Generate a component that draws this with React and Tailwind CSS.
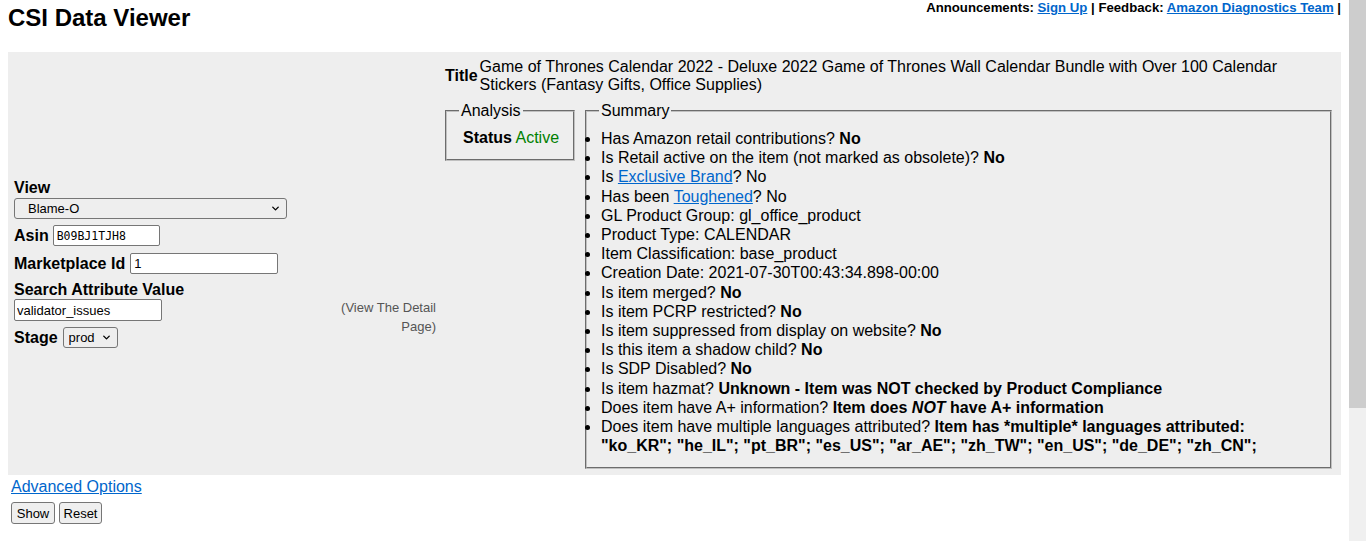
import { FiChevronDown } from 'react-icons/fi';

const SUMMARY = [
  { q: 'Has Amazon retail contributions?', a: 'No' },
  { q: 'Is Retail active on the item (not marked as obsolete)?', a: 'No' },
  { q: 'Is', link: 'Exclusive Brand', tail: '? No' },
  { q: 'Has been', link: 'Toughened', tail: '? No' },
  { q: 'GL Product Group: gl_office_product' },
  { q: 'Product Type: CALENDAR' },
  { q: 'Item Classification: base_product' },
  { q: 'Creation Date: 2021-07-30T00:43:34.898-00:00' },
  { q: 'Is item merged?', a: 'No' },
  { q: 'Is item PCRP restricted?', a: 'No' },
  { q: 'Is item suppressed from display on website?', a: 'No' },
  { q: 'Is this item a shadow child?', a: 'No' },
  { q: 'Is SDP Disabled?', a: 'No' },
  { q: 'Is item hazmat?', a: 'Unknown - Item was NOT checked by Product Compliance' },
];

const LINK = 'text-[#0066cc] underline';

const Select = ({ value, width, textPad }) => (
  <div className={`relative h-[21px] ${width}`}>
    <select
      defaultValue={value}
      className={`block appearance-none w-full h-full border border-[#767676] rounded-[3px] bg-transparent text-[13px] ${textPad} pr-[20px] text-black`}
    >
      <option value={value}>{value}</option>
    </select>
    <FiChevronDown className="absolute right-[6px] top-[5px] pointer-events-none" size={11} strokeWidth={3} />
  </div>
);

const App = () => {
  return (
    <div className="flex h-[541px] overflow-hidden bg-white font-['Liberation_Sans',Arial,sans-serif] text-black">
      <div className="flex-1 px-[8px]">
        {/* Header */}
        <div className="flex justify-between items-start h-[52px]">
          <h1 className="text-[24px] font-bold leading-[27px] mt-[4px]">CSI Data Viewer</h1>
          <div className="text-[13.2px] font-bold leading-[15px]">
            Announcements: <a href="#" className={LINK}>Sign Up</a> | Feedback:{' '}
            <a href="#" className={LINK}>Amazon Diagnostics Team</a> |
          </div>
        </div>

        {/* Main panel */}
        <div className="flex bg-[#eeeeee]">
          {/* Form column */}
          <div className="w-[437px] flex items-center pl-[6px] pr-[9px]">
            <div className="w-full">
              <div className="text-[16px] font-bold leading-[18px]">View</div>
              <div className="mt-[1px]">
                <Select value="Blame-O" width="w-[273px]" textPad="pl-[13px]" />
              </div>
              <div className="flex items-center gap-[4px] mt-[6px]">
                <span className="text-[16px] font-bold leading-[18px]">Asin</span>
                <input
                  defaultValue="B09BJ1TJH8"
                  className="w-[107px] h-[21px] bg-white border border-[#767676] rounded-[2px] px-[3px] text-[11.5px] font-['DejaVu_Sans_Mono',monospace]"
                />
              </div>
              <div className="flex items-center gap-[5px] mt-[7px]">
                <span className="text-[16px] font-bold leading-[18px]">Marketplace Id</span>
                <input
                  defaultValue="1"
                  className="w-[148px] h-[21px] bg-white border border-[#767676] rounded-[2px] px-[3px] text-[13px]"
                />
              </div>
              <div className="text-[16px] font-bold leading-[18px] mt-[7px]">Search Attribute Value</div>
              <div className="flex justify-between items-start h-[22px]">
                <input
                  defaultValue="validator_issues"
                  className="w-[148px] h-[22px] bg-white border border-[#767676] rounded-[2px] px-[2px] text-[13px]"
                />
                <div className="text-[13px] leading-[19px] text-right text-[#555] -mt-[1px]">
                  (View The Detail
                  <br />
                  Page)
                </div>
              </div>
              <div className="flex items-center gap-[5px] mt-[6px]">
                <span className="text-[16px] font-bold leading-[18px]">Stage</span>
                <Select value="prod" width="w-[55px]" textPad="pl-[5px]" />
              </div>
            </div>
          </div>

          {/* Detail column */}
          <div className="flex-1 pt-[6px] pr-[9px] pb-[6px]">
            <div className="flex items-center">
              <span className="text-[16px] font-bold">Title</span>
              <span className="text-[16px] leading-[18px] ml-[2px]">
                Game of Thrones Calendar 2022 - Deluxe 2022 Game of Thrones Wall Calendar Bundle with Over 100 Calendar
                Stickers (Fantasy Gifts, Office Supplies)
              </span>
            </div>

            <div className="flex items-start gap-[10px] mt-[8px]">
              <fieldset className="w-[130px] border-2 [border-style:groove] border-[#c0c0c0] px-[12px] pb-[12px]">
                <legend className="px-[2px] text-[16px] leading-[18px]">Analysis</legend>
                <div className="pt-[9px] pl-[4px] text-[16px] leading-[18px] whitespace-nowrap">
                  <b>Status</b> <span className="text-[#008000]">Active</span>
                </div>
              </fieldset>

              <fieldset className="flex-1 border-2 [border-style:groove] border-[#c0c0c0] px-[12px] pb-[12px]">
                <legend className="px-[2px] text-[16px] leading-[18px]">Summary</legend>
                <ul className="list-disc -ml-[12px] pl-[14px] pt-[9px] text-[16px] leading-[19.2px]">
                  {SUMMARY.map((item, i) => (
                    <li key={i}>
                      {item.q}
                      {item.link && (
                        <>
                          {' '}
                          <a href="#" className={LINK}>{item.link}</a>
                          {item.tail}
                        </>
                      )}
                      {item.a && (
                        <>
                          {' '}
                          <b>{item.a}</b>
                        </>
                      )}
                    </li>
                  ))}
                  <li>
                    Does item have A+ information? <b>Item does <i>NOT</i> have A+ information</b>
                  </li>
                  <li>
                    Does item have multiple languages attributed?{' '}
                    <b>
                      Item has *multiple* languages attributed:
                      <br />
                      "ko_KR"; "he_IL"; "pt_BR"; "es_US"; "ar_AE"; "zh_TW"; "en_US"; "de_DE"; "zh_CN";
                    </b>
                  </li>
                </ul>
              </fieldset>
            </div>
          </div>
        </div>

        <div className="pl-[3px] mt-[3px]">
          <div className="leading-[18px]">
            <a href="#" className={`${LINK} text-[16px]`}>Advanced Options</a>
          </div>
          <div className="flex gap-[4px] mt-[6px]">
            <button className="h-[22px] w-[44px] border border-[#767676] rounded-[3px] bg-[#efefef] text-[13px]">Show</button>
            <button className="h-[22px] w-[43px] border border-[#767676] rounded-[3px] bg-[#efefef] text-[13px]">Reset</button>
          </div>
        </div>
      </div>

      {/* Window scrollbar */}
      <div className="w-[17px] bg-[#f0f0f0] flex flex-col">
        <div className="h-[408px] bg-[#cdcdcd]" />
      </div>
    </div>
  );
};

export default App;
